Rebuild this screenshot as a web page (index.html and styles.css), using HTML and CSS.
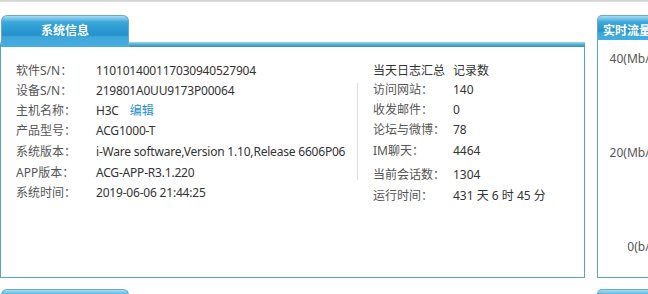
FILE: index.html
```html
<!doctype html>
<html>
	<head>
		<meta charset="utf-8"/>
		<title>系统首页</title>
		<link rel="stylesheet" href="styles.css">
	</head>
	<body>

		<div class="topbar"></div>

		<div class="board">

			<section class="panel info">
				<div class="panel-head"><span class="tab">系统信息</span></div>
				<div class="panel-body">

					<table class="kv sys">
						<tr><th>软件S/N：</th><td>110101400117030940527904</td></tr>
						<tr><th>设备S/N：</th><td>219801A0UU9173P00064</td></tr>
						<tr><th>主机名称：</th><td>H3C <a href="#" class="edit">编辑</a></td></tr>
						<tr><th>产品型号：</th><td>ACG1000-T</td></tr>
						<tr><th>系统版本：</th><td>i-Ware software,Version 1.10,Release 6606P06</td></tr>
						<tr><th>APP版本：</th><td>ACG-APP-R3.1.220</td></tr>
						<tr><th>系统时间：</th><td>2019-06-06 21:44:25</td></tr>
					</table>

					<div class="stats">
						<div class="row head"><span>当天日志汇总</span><span>记录数</span></div>
						<div class="log">
							<div class="row"><span>访问网站：</span><span>140</span></div>
							<div class="row"><span>收发邮件：</span><span>0</span></div>
							<div class="row"><span>论坛与微博：</span><span>78</span></div>
							<div class="row im"><span>IM聊天：</span><span>4464</span></div>
							<div class="row sep"><span>当前会话数：</span><span>1304</span></div>
						</div>
						<div class="row uptime"><span>运行时间：</span><span>431 天 6 时 45 分</span></div>
					</div>

				</div>
			</section>

			<section class="panel flow">
				<div class="panel-head"><span class="tab wide">实时流量</span></div>
				<div class="panel-body chart">
					<div class="axis">
						<span>40(Mb/s)</span>
						<span>20(Mb/s)</span>
						<span>0(b/s)</span>
					</div>
				</div>
			</section>

		</div>

		<!-- next row of panels, only the tab tops are visible -->
		<div class="board next">
			<section class="panel info"><div class="panel-head"><span class="tab"></span></div></section>
			<section class="panel flow"><div class="panel-head"><span class="tab wide"></span></div></section>
		</div>

	</body>
</html>
```

FILE: styles.css
```css
body {
	margin: 0;
	width: 648px;
	height: 294px;
	overflow: hidden;
	background: #fff;
	font-family: "Noto Sans", "Noto Sans CJK SC", sans-serif;
	font-size: 12px;
	color: #333;
}

.topbar {
	height: 2px;
	background: linear-gradient(#cfcfcf, #e2e2e2);
}

.board {
	display: flex;
	gap: 12px;
	margin-top: 13px;
}
.board.next { margin-top: 11px; }

.panel { flex: none; }
.panel.info { width: 585px; }
.panel.flow { width: 320px; }

.panel-head {
	height: 32px;
	display: flex;
	background: linear-gradient(#a3dbf1, #62badf 35%, #4aa3c7 70%, #3e8ead) no-repeat left bottom / 100% 5px;
}

.tab {
	box-sizing: border-box;
	width: 128px;
	height: 32px;
	margin-left: 1px;
	border: 1px solid #6aa9c8;
	border-bottom: 0;
	border-radius: 6px 6px 0 0;
	background: linear-gradient(#a6dbf2 0, #72c3e9 3px, #3ca7da 6px, #2d9cd2 13px, #2592c9 19px, #3fa7db 21px, #46addf 100%);
	color: #fff;
	font-weight: bold;
	text-align: center;
	line-height: 29px;
}

.flow .panel-head {
	height: 25px;
	background: none;
}
.tab.wide {
	width: 100%;
	height: 25px;
	margin-left: 0;
	border-radius: 5px 0 0 0;
	text-align: left;
	padding-left: 5px;
	line-height: 29px;
	background: linear-gradient(#a6dbf2 0, #72c3e9 3px, #3ca7da 6px, #2d9cd2 12px, #2592c9 15px, #3fa7db 17px, #46addf 100%);
}

.panel-body {
	box-sizing: border-box;
	height: 231px;
	border: 1px solid #5aa7ba;
	border-top: 0;
	display: flex;
	padding: 14px 0 0 15px;
}

/* key / value table */
.kv {
	border-collapse: collapse;
	width: 341px;
	align-self: flex-start;
}
.kv th {
	width: 80px;
	padding: 0;
	text-align: left;
	font-weight: normal;
	color: #555;
	white-space: nowrap;
}
.kv td {
	padding: 0;
	white-space: nowrap;
	letter-spacing: -0.2px;
}
.kv tr { height: 20px; line-height: 19px; }
.kv tr:first-child { height: 19px; }
.kv tr:nth-child(4),
.kv tr:nth-child(5) { height: 21px; }

.edit {
	color: #2a8fd0;
	text-decoration: none;
	margin-left: 8px;
	letter-spacing: 0;
}

/* daily log summary */
.stats { width: 220px; }
.stats .row {
	display: flex;
	height: 20px;
	line-height: 19px;
	padding-left: 16px;
}
.stats .row.head { height: 19px; }
.stats .row span:first-child {
	width: 80px;
	color: #555;
	white-space: nowrap;
}
.stats .row.head span { color: #333; }
.stats .row.im { margin-top: 1px; }
.stats .row.sep { margin-top: 4px; }
.stats .row.uptime { margin-top: 1px; }

.log {
	background: linear-gradient(#dcdcdc, #dcdcdc) no-repeat left 3px / 1px calc(100% - 8px);
}

/* traffic chart */
.chart {
	height: 238px;
	padding: 12px 0 0 0;
}
.axis {
	width: 61px;
	display: flex;
	flex-direction: column;
	gap: 80px;
	align-items: flex-end;
	color: #555;
	line-height: 14px;
	white-space: nowrap;
}
```
